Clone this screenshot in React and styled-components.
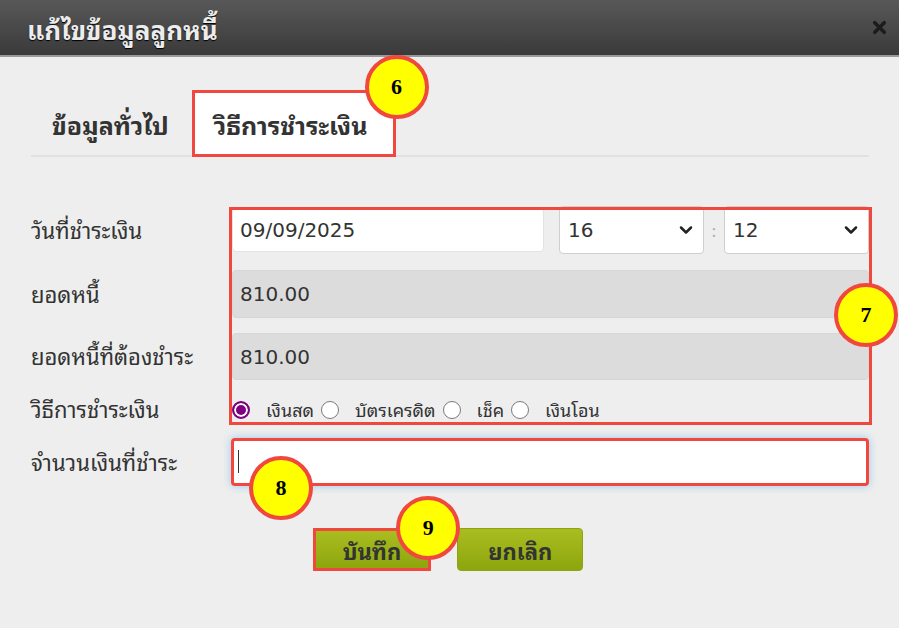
import React, { useState } from "react";
import styled, { createGlobalStyle } from "styled-components";
import { ChevronDown, X } from "lucide-react";

const GlobalStyle = createGlobalStyle`
  html, body {
    margin: 0;
    padding: 0;
    background: #eeeeee;
  }
  body {
    font-family: Tahoma, "Noto Sans Thai Looped", "Noto Sans Thai", "Noto Sans", "DejaVu Sans", sans-serif;
    color: #333;
  }
`;

const Modal = styled.div`
  width: 899px;
  min-height: 628px;
  background: #eeeeee;
  overflow: hidden;
`;

const Header = styled.div`
  height: 55px;
  background: linear-gradient(#585858, #3a3a3a);
  border-bottom: 2px solid #9a9a9a;
  display: flex;
  align-items: center;
  justify-content: space-between;
  padding: 0 10px 0 27px;
`;

const Title = styled.h1`
  margin: 0;
  font-size: 26px;
  font-weight: bold;
  color: #ececec;
  text-shadow: 0 1px 1px #000;
`;

const CloseButton = styled.button`
  border: 0;
  background: none;
  padding: 0;
  display: flex;
  color: #1c1c1c;
  cursor: pointer;
`;

const Body = styled.div`
  padding: 33px 30px 40px 31px;
`;

const TabBar = styled.div`
  display: flex;
  border-bottom: 2px solid #e1e1e1;
`;

const Tab = styled.div`
  position: relative;
  height: 67px;
  box-sizing: border-box;
  display: flex;
  align-items: center;
  padding: ${(p) => (p.$active ? "0 25px 0 19px" : "0 20px 0 18px")};
  margin-bottom: -2px;
  font-size: 25px;
  font-weight: bold;
  color: #333;
  background: ${(p) => (p.$active ? "#fff" : "transparent")};
  border: ${(p) => (p.$active ? "3px solid #f0483e" : "3px solid transparent")};
`;

const Badge = styled.div`
  position: absolute;
  width: 56px;
  height: 56px;
  border-radius: 50%;
  background: #ffff00;
  border: 4px solid #f0483e;
  display: flex;
  align-items: center;
  justify-content: center;
  font-family: "Liberation Serif", "DejaVu Serif", serif;
  font-weight: bold;
  font-size: 22px;
  color: #000;
  z-index: 5;
`;

const TabBadge = styled(Badge)`
  left: calc(100% - 28px);
  top: -38px;
`;

const Form = styled.form`
  margin-top: 49px;
`;

const Highlight = styled.div`
  position: relative;
  &::after {
    content: "";
    position: absolute;
    left: 198px;
    right: -3px;
    top: 1px;
    bottom: -1px;
    border: 3px solid #f0483e;
    pointer-events: none;
  }
`;

const GroupBadge = styled(Badge)`
  right: -29px;
  top: 50%;
  transform: translateY(-50%);
`;

const Row = styled.div`
  display: flex;
  align-items: center;
  height: ${(p) => p.$h || 48}px;
  margin-top: ${(p) => p.$mt || 0}px;
`;

const Label = styled.label`
  width: 201px;
  flex: none;
  font-size: 22px;
  white-space: nowrap;
  color: #333;
  margin-top: -3px;
`;

const Field = styled.div`
  flex: 1;
  display: flex;
  align-items: center;
  height: 100%;
  position: relative;
`;

const TextInput = styled.input`
  box-sizing: border-box;
  width: 100%;
  height: ${(p) => p.$h || 48}px;
  border: 1px solid ${(p) => (p.$readOnly ? "#d6d6d6" : "#e3e3e3")};
  border-radius: 4px;
  background: ${(p) => (p.$readOnly ? "#dcdcdc" : "#fff")};
  font-family: "DejaVu Sans", Verdana, sans-serif;
  font-size: 20px;
  color: #333;
  padding: 0 7px;
  outline: none;
`;

const DateInput = styled(TextInput)`
  flex: 1;
  width: auto;
  height: 44px;
`;

const SelectWrap = styled.div`
  position: relative;
  width: 145px;
  flex: none;
  margin-left: ${(p) => p.$ml || 0}px;
`;

const Select = styled.select`
  appearance: none;
  box-sizing: border-box;
  width: 100%;
  height: 48px;
  border: 1px solid #cfcfcf;
  border-radius: 4px;
  background: #fff;
  font-family: "DejaVu Sans", Verdana, sans-serif;
  font-size: 20px;
  color: #333;
  padding: 0 8px;
  outline: none;
`;

const Chevron = styled(ChevronDown)`
  position: absolute;
  right: 8px;
  top: 50%;
  transform: translateY(-50%);
  pointer-events: none;
  color: #222;
`;

const Colon = styled.span`
  width: 20px;
  text-align: center;
  color: #aaa;
  font-size: 16px;
  flex: none;
`;

const RadioGroup = styled.div`
  display: flex;
  align-items: center;
  height: 100%;
`;

const RadioItem = styled.label`
  display: flex;
  align-items: center;
  font-size: 18px;
  color: #333;
  margin-right: 7px;
`;

const Radio = styled.input`
  appearance: none;
  box-sizing: border-box;
  width: 18px;
  height: 18px;
  margin: 2px 16px 0 0;
  border-radius: 50%;
  border: 1.5px solid #7a7a7a;
  background: #fff;
  &:checked {
    border: 2px solid #800080;
    background: #800080;
    box-shadow: inset 0 0 0 2px #fff;
  }
`;

const AmountInput = styled(TextInput)`
  border: 3px solid #f0483e;
  box-shadow: 0 0 8px rgba(102, 175, 233, 0.6);
  margin-left: -1px;
  width: calc(100% + 3px);
`;

const Caret = styled.span`
  position: absolute;
  left: 6px;
  top: 12px;
  width: 1px;
  height: 23px;
  background: #333;
  pointer-events: none;
`;

const AmountBadge = styled(Badge)`
  left: 17px;
  top: 18px;
`;

const Actions = styled.div`
  display: flex;
  justify-content: center;
  gap: 26px;
  margin-top: 42px;
  margin-left: -4px;
`;

const Button = styled.button`
  position: relative;
  height: 43px;
  box-sizing: border-box;
  padding: 0 ${(p) => (p.$highlight ? "27px" : "30px")};
  border: ${(p) => (p.$highlight ? "3px solid #f0483e" : "1px solid #8fa312")};
  border-radius: ${(p) => (p.$highlight ? "0" : "4px")};
  background: linear-gradient(#a9bd20, #8da60e);
  font-family: Tahoma, "Noto Sans Thai Looped", "Noto Sans Thai", "Noto Sans", sans-serif;
  font-size: 22px;
  font-weight: bold;
  color: #333;
  cursor: pointer;
`;

const ButtonBadge = styled(Badge)`
  left: calc(100% - 32px);
  top: -35px;
`;

const methods = ["เงินสด", "บัตรเครดิต", "เช็ค", "เงินโอน"];

export default function App() {
  const [method, setMethod] = useState("เงินสด");
  const [hour, setHour] = useState("16");
  const [minute, setMinute] = useState("12");
  const [amount, setAmount] = useState("");

  const hours = Array.from({ length: 24 }, (_, i) => String(i).padStart(2, "0"));
  const minutes = Array.from({ length: 60 }, (_, i) => String(i).padStart(2, "0"));

  return (
    <>
      <GlobalStyle />
      <Modal>
        <Header>
          <Title>แก้ไขข้อมูลลูกหนี้</Title>
          <CloseButton type="button">
            <X size={19} strokeWidth={4.5} />
          </CloseButton>
        </Header>
        <Body>
          <TabBar>
            <Tab>ข้อมูลทั่วไป</Tab>
            <Tab $active>
              วิธีการชำระเงิน
              <TabBadge>6</TabBadge>
            </Tab>
          </TabBar>

          <Form onSubmit={(e) => e.preventDefault()}>
            <Highlight>
              <Row>
                <Label>วันที่ชำระเงิน</Label>
                <Field>
                  <DateInput defaultValue="09/09/2025" />
                  <SelectWrap $ml={15}>
                    <Select value={hour} onChange={(e) => setHour(e.target.value)}>
                      {hours.map((h) => (
                        <option key={h} value={h}>{h}</option>
                      ))}
                    </Select>
                    <Chevron size={20} strokeWidth={3} />
                  </SelectWrap>
                  <Colon>:</Colon>
                  <SelectWrap>
                    <Select value={minute} onChange={(e) => setMinute(e.target.value)}>
                      {minutes.map((m) => (
                        <option key={m} value={m}>{m}</option>
                      ))}
                    </Select>
                    <Chevron size={20} strokeWidth={3} />
                  </SelectWrap>
                </Field>
              </Row>
              <Row $mt={16}>
                <Label>ยอดหนี้</Label>
                <Field>
                  <TextInput $readOnly readOnly value="810.00" />
                </Field>
              </Row>
              <Row $mt={15} $h={47}>
                <Label>ยอดหนี้ที่ต้องชำระ</Label>
                <Field>
                  <TextInput $readOnly $h={47} readOnly value="810.00" />
                </Field>
              </Row>
              <Row $mt={14} $h={30}>
                <Label>วิธีการชำระเงิน</Label>
                <Field>
                  <RadioGroup>
                    {methods.map((m) => (
                      <RadioItem key={m}>
                        <Radio
                          type="radio"
                          name="method"
                          checked={method === m}
                          onChange={() => setMethod(m)}
                        />
                        {m}
                      </RadioItem>
                    ))}
                  </RadioGroup>
                </Field>
              </Row>
              <GroupBadge>7</GroupBadge>
            </Highlight>

            <Row $mt={14}>
              <Label>จำนวนเงินที่ชำระ</Label>
              <Field>
                <AmountInput
                  value={amount}
                  onChange={(e) => setAmount(e.target.value)}
                />
                <Caret />
                <AmountBadge>8</AmountBadge>
              </Field>
            </Row>

            <Actions>
              <Button type="submit" $highlight>
                บันทึก
                <ButtonBadge>9</ButtonBadge>
              </Button>
              <Button type="button">ยกเลิก</Button>
            </Actions>
          </Form>
        </Body>
      </Modal>
    </>
  );
}
